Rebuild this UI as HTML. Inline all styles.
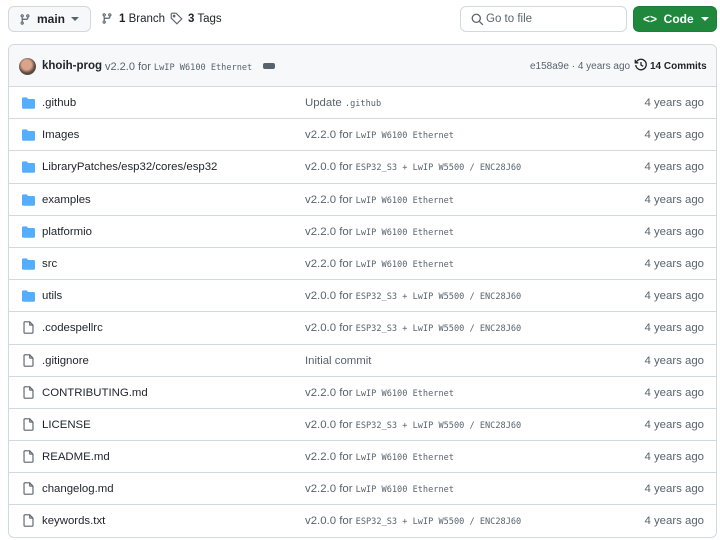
<!DOCTYPE html>
<html><head><style>
*{box-sizing:border-box;margin:0;padding:0}
html,body{width:720px;height:540px;overflow:hidden}
body{background:#fff;font-family:"Liberation Sans",sans-serif;font-size:11px;color:#1f2328;position:relative}
.abs{position:absolute}
.btn{position:absolute;border:1px solid #d1d9e0;border-radius:6px;display:flex;align-items:center}
.box{position:absolute;left:8px;top:44px;width:709px;height:494px;border:1px solid #d1d9e0;border-radius:6px;overflow:hidden}
.hdr{height:42px;background:#f6f8fa;border-bottom:1px solid #d1d9e0;position:relative}
.row{height:32.2px;border-bottom:1px solid #d1d9e0;position:relative}
.row .n{position:absolute;left:33px;top:10px;font-size:11.4px;color:#1f2328}
.row .m{position:absolute;left:296px;top:10px;color:#59636e;font-size:11.4px}
.row .d{position:absolute;right:12px;top:10px;color:#59636e;font-size:11.4px}
.mono{font-family:"DejaVu Sans Mono","Liberation Mono",monospace;font-size:8.6px}
.ic{position:absolute;left:13px;top:10px}
</style></head><body>
<div class="btn" style="left:8px;top:6px;width:83px;height:26px;background:#f6f8fa">
<svg class="abs" style="left:10px;top:6px" width="12" height="13" viewBox="0 0 16 16" fill="#59636e"><path d="M9.5 3.25a2.25 2.25 0 1 1 3 2.12V6A2.5 2.5 0 0 1 10 8.5H6a1 1 0 0 0-1 1v1.13a2.25 2.25 0 1 1-1.5 0V5.37a2.25 2.25 0 1 1 1.5 0v1.64c.3-.17.64-.26 1-.26h4a1 1 0 0 0 1-1v-.38a2.25 2.25 0 0 1-1.5-2.12ZM5 3.25a.75.75 0 1 0-1.5 0 .75.75 0 0 0 1.5 0Zm6.75.75a.75.75 0 1 0 0-1.5.75.75 0 0 0 0 1.5Zm-8.5 8.75a.75.75 0 1 0 1.5 0 .75.75 0 0 0-1.5 0Z"/></svg>
<span class="abs" style="left:28px;top:5px;font-weight:bold;font-size:12px">main</span>
<span class="abs" style="left:62px;top:10px;border:4px solid transparent;border-top:4px solid #59636e"></span>
</div>
<svg class="abs" style="left:101px;top:12px" width="12" height="13" viewBox="0 0 16 16" fill="#59636e"><path d="M9.5 3.25a2.25 2.25 0 1 1 3 2.12V6A2.5 2.5 0 0 1 10 8.5H6a1 1 0 0 0-1 1v1.13a2.25 2.25 0 1 1-1.5 0V5.37a2.25 2.25 0 1 1 1.5 0v1.64c.3-.17.64-.26 1-.26h4a1 1 0 0 0 1-1v-.38a2.25 2.25 0 0 1-1.5-2.12ZM5 3.25a.75.75 0 1 0-1.5 0 .75.75 0 0 0 1.5 0Zm6.75.75a.75.75 0 1 0 0-1.5.75.75 0 0 0 0 1.5Zm-8.5 8.75a.75.75 0 1 0 1.5 0 .75.75 0 0 0-1.5 0Z"/></svg>
<span class="abs" style="left:119px;top:13px;font-size:11.5px"><b>1</b> Branch</span>
<svg class="abs" style="left:170px;top:12px" width="13" height="13" viewBox="0 0 16 16" fill="none" stroke="#59636e" stroke-width="1.4"><path d="M1.5 2.5v5l7 7 6-6-7-7h-5z"/><circle cx="5" cy="5" r="1"/></svg>
<span class="abs" style="left:188px;top:13px;font-size:11.5px"><b>3</b> Tags</span>
<div class="btn" style="left:460px;top:6px;width:167px;height:26px">
<svg class="abs" style="left:10px;top:6px" width="13" height="13" viewBox="0 0 16 16" fill="none" stroke="#59636e" stroke-width="1.6"><circle cx="6.5" cy="6.5" r="5"/><path d="M10.5 10.5l4 4"/></svg>
<span class="abs" style="left:25px;top:6px;color:#59636e;font-size:11.5px">Go to file</span></div>
<div class="btn" style="left:633px;top:6px;width:84px;height:26px;background:#1f883d;border-color:#1a7f37;color:#fff">
<span class="abs" style="left:9px;top:5px;font-weight:bold;font-size:12px">&lt;&gt;&nbsp; Code</span>
<span class="abs" style="left:67px;top:10px;border:4px solid transparent;border-top:4px solid #fff"></span></div>
<div class="box">
<div class="hdr">
<div class="abs" style="left:10px;top:13px;width:17px;height:17px;border-radius:50%;background:radial-gradient(circle at 45% 40%,#d9a48a 0 35%,#5a4a40 60%)"></div>
<span class="abs" style="left:33px;top:15px;font-weight:bold;font-size:11.5px">khoih-prog</span>
<span class="abs" style="left:96px;top:16px;color:#59636e;font-size:11px">v2.2.0 for <span class="mono">LwIP W6100 Ethernet</span></span>
<span class="abs" style="left:254px;top:18px;width:12px;height:6px;background:#59636e;border-radius:2px"></span>
<span class="abs" style="left:521px;top:16px;color:#59636e;font-size:10px">e158a9e · 4 years ago</span>
<svg class="abs" style="left:625px;top:13px" width="14" height="14" viewBox="0 0 16 16" fill="none" stroke="#1f2328" stroke-width="1.5"><path d="M2.5 5A6 6 0 1 1 2 8"/><path d="M1.5 2v3.5H5"/><path d="M8 4.5V8l2.5 1.5"/></svg>
<span class="abs" style="left:641px;top:16px;font-weight:bold;font-size:10px">14 Commits</span>
</div>
<div id="rows"></div>
</div>
<script>
var F='<svg class="ic" width="13" height="12" viewBox="0 0 16 14"><path fill="#54aeff" d="M0 1.5C0 .7.7 0 1.5 0h3.6c.5 0 .9.2 1.2.6l.9 1.2c.1.1.3.2.4.2h6.9c.8 0 1.5.7 1.5 1.5v9c0 .8-.7 1.5-1.5 1.5h-13C.7 14 0 13.3 0 12.5z"/></svg>';
var D='<svg class="ic" width="13" height="15" viewBox="0 0 16 16" style="top:8px" fill="none" stroke="#59636e" stroke-width="1.4"><path d="M3.5 1h6l4 4v9.2c0 .4-.4.8-.8.8H3.3c-.4 0-.8-.4-.8-.8V1.8c0-.4.4-.8.8-.8z"/><path d="M9.5 1v4h4"/></svg>';
var a='v2.2.0 for <span class="mono">LwIP W6100 Ethernet</span>',b='v2.0.0 for <span class="mono">ESP32_S3 + LwIP W5500 / ENC28J60</span>';
var r=[[1,'.github','Update <span class="mono">.github</span>'],[1,'Images',a],[1,'LibraryPatches/esp32/cores/esp32',b],[1,'examples',a],[1,'platformio',a],[1,'src',a],[1,'utils',b],[0,'.codespellrc',b],[0,'.gitignore','Initial commit'],[0,'CONTRIBUTING.md',a],[0,'LICENSE',b],[0,'README.md',a],[0,'changelog.md',a],[0,'keywords.txt',b],[0,'library.json',a]];
var h='';r.forEach(function(x){h+='<div class="row">'+(x[0]?F:D)+'<span class="n">'+x[1]+'</span><span class="m">'+x[2]+'</span><span class="d">4 years ago</span></div>'});
document.getElementById('rows').innerHTML=h;
</script>
</body></html>
